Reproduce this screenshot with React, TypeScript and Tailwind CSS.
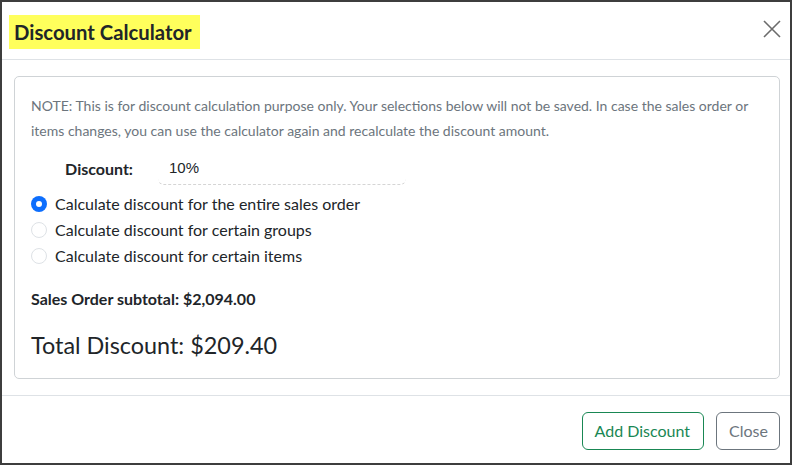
const options = [
  { label: "Calculate discount for the entire sales order", checked: true },
  { label: "Calculate discount for certain groups", checked: false },
  { label: "Calculate discount for certain items", checked: false },
];

export default function App() {
  return (
    <div className="w-[792px] h-[465px] border-2 border-[#3d3d3d] bg-white flex flex-col text-[#212529] font-['Lato',sans-serif]">
      {/* Header */}
      <div className="h-[58px] flex items-start justify-between border-b border-[#dee2e6] pl-[7px] pr-[9px] pt-[13px] shrink-0">
        <h1 className="bg-[#ffff5c] h-[34px] pl-[5px] pr-[8px] flex items-center text-[20.3px] font-bold leading-none">
          Discount Calculator
        </h1>
        <button className="mt-[5px] text-[#6b6b6b]">
          <svg width="18" height="18" viewBox="0 0 18 18" fill="none" stroke="currentColor" strokeWidth="1.6">
            <path d="M1 1L17 17M17 1L1 17" />
          </svg>
        </button>
      </div>

      {/* Body */}
      <div className="pl-3 pr-[10px] pt-4 pb-4 shrink-0">
        <div className="border border-[#cfd3d6] rounded-[5px] h-[303px] px-4 pt-[16px]">
          <p className="text-[14px] leading-[25px] text-[#6c757d]">
            NOTE: This is for discount calculation purpose only. Your selections below will not be saved. In case the sales order or
            items changes, you can use the calculator again and recalculate the discount amount.
          </p>
          <div className="flex items-center mt-[10px] h-[32px]">
            <span className="w-[102px] text-right text-[16px] font-bold">Discount:</span>
            <div className="ml-[25px] w-[248px] h-[32px] flex items-center pl-[11px] border-b border-dashed border-[#d5d5d5] rounded-md font-['Liberation_Sans',sans-serif] text-[15px]">
              10%
            </div>
          </div>
          <div className="mt-[6px] flex flex-col">
            {options.map((o) => (
              <label key={o.label} className="flex items-center h-[26px] gap-2 text-[16px]">
                {o.checked ? (
                  <span className="w-4 h-4 rounded-full bg-[#0d6efd] flex items-center justify-center">
                    <span className="w-[6px] h-[6px] rounded-full bg-white" />
                  </span>
                ) : (
                  <span className="w-4 h-4 rounded-full border border-[#dee2e6] bg-white" />
                )}
                {o.label}
              </label>
            ))}
          </div>
          <p className="mt-[19px] text-[16px] font-bold leading-[22px]">Sales Order subtotal: $2,094.00</p>
          <p className="mt-[20px] text-[23.4px] leading-[30px]">Total Discount: $209.40</p>
        </div>
      </div>

      {/* Footer */}
      <div className="border-t border-[#dee2e6] flex-1 flex items-start justify-end gap-[12px] pr-[10px] pt-4">
        <button className="h-[38px] pl-3 pr-[13px] rounded-md border border-[#198754] text-[#198754] text-[16px]">
          Add Discount
        </button>
        <button className="h-[38px] pl-3 pr-[11px] rounded-md border border-[#6c757d] text-[#6c757d] text-[16px]">
          Close
        </button>
      </div>
    </div>
  );
}
